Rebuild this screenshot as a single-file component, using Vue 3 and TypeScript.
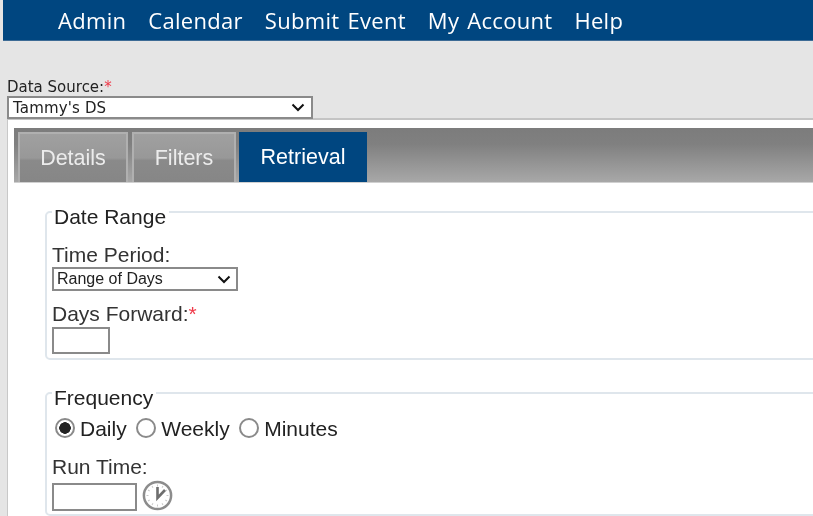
<script setup lang="ts">
import { ref } from 'vue'

const navItems = ['Admin', 'Calendar', 'Submit Event', 'My Account', 'Help']
const tabs = ['Details', 'Filters', 'Retrieval']
const activeTab = ref('Retrieval')
const frequencies = ['Daily', 'Weekly', 'Minutes']
const frequency = ref('Daily')
const ticks = Array.from({ length: 12 }, (_, i) => i * 30)
</script>

<template>
  <div class="page">
    <nav class="nav">
      <a v-for="item in navItems" :key="item" class="nav__item">{{ item }}</a>
    </nav>

    <div class="source">
      <label class="source__label">Data Source:<span class="req">*</span></label>
      <div class="select select--source">
        <span>Tammy's DS</span>
        <svg width="14" height="9" viewBox="0 0 14 9" aria-hidden="true">
          <path d="M1.5 1.5 7 7l5.5-5.5" fill="none" stroke="#111" stroke-width="2" />
        </svg>
      </div>
    </div>

    <section class="panel">
      <div class="tabs">
        <button
          v-for="tab in tabs"
          :key="tab"
          class="tab"
          :class="{ 'tab--active': tab === activeTab }"
          @click="activeTab = tab"
        >
          {{ tab }}
        </button>
      </div>

      <fieldset class="group group--date">
        <legend>Date Range</legend>
        <div class="label label--period">Time Period:</div>
        <div class="select select--period">
          <span>Range of Days</span>
          <svg width="14" height="9" viewBox="0 0 14 9" aria-hidden="true">
            <path d="M1.5 1.5 7 7l5.5-5.5" fill="none" stroke="#111" stroke-width="2" />
          </svg>
        </div>
        <div class="label label--forward">Days Forward:<span class="req">*</span></div>
        <input class="input input--days" type="text" />
      </fieldset>

      <fieldset class="group group--frequency">
        <legend>Frequency</legend>
        <div class="radios">
          <label v-for="f in frequencies" :key="f" class="radio">
            <input v-model="frequency" type="radio" name="frequency" :value="f" />
            {{ f }}
          </label>
        </div>
        <div class="label label--run">Run Time:</div>
        <div class="time">
          <input class="input input--time" type="text" />
          <svg class="clock" width="31" height="31" viewBox="0 0 31 31" aria-hidden="true">
            <circle cx="15.5" cy="15.5" r="13.6" fill="#fff" stroke="#8c8c8c" stroke-width="2.5" />
            <line
              v-for="t in ticks"
              :key="t"
              x1="15.5"
              y1="4.5"
              x2="15.5"
              y2="6.5"
              stroke="#c8c8c8"
              :transform="`rotate(${t} 15.5 15.5)`"
            />
            <path d="M15.5 7v11l7.5-8" fill="none" stroke="#6e6e6e" stroke-width="2.6" />
          </svg>
        </div>
      </fieldset>
    </section>
  </div>
</template>

<style>
body {
  background: #e5e5e5;
}
</style>

<style scoped>
.page {
  width: 813px;
  height: 516px;
  overflow: hidden;
  background: #e5e5e5;
  font-family: "Liberation Sans", Arial, sans-serif;
  color: #333;
  filter: blur(0.35px);
}

.nav {
  display: flex;
  gap: 22px;
  height: 41px;
  margin-left: 3px;
  padding-left: 55px;
  align-items: center;
  background: #004680;
  border-bottom: 1px solid #3d6b95;
  box-sizing: border-box;
  color: #fff;
  font-family: "Open Sans", sans-serif;
  font-size: 22px;
  letter-spacing: 0.3px;
  word-spacing: 2px;
}

.source {
  padding: 38px 0 0 7px;
}

.source__label {
  display: block;
  height: 17px;
  font-family: "DejaVu Sans", sans-serif;
  font-size: 15px;
  line-height: 17px;
  color: #222;
}

.req {
  color: #f03a4a;
}

.select {
  display: flex;
  align-items: center;
  justify-content: space-between;
  box-sizing: border-box;
  background: #fff;
  border: 2px solid #8a8a8a;
  color: #222;
}

.select--source {
  width: 306px;
  height: 23px;
  padding: 0 6px 0 4px;
  font-family: "DejaVu Sans", sans-serif;
  font-size: 15px;
  letter-spacing: 0.15px;
  position: relative;
  z-index: 1;
}

.select--period {
  width: 186px;
  height: 24px;
  margin-top: 1px;
  padding: 0 5px 0 3px;
  font-size: 16px;
}

.panel {
  width: 900px;
  height: 400px;
  margin-left: 7px;
  margin-top: -1px;
  padding: 8px 0 0 6px;
  background: #fff;
  border-top: 2px solid #c4c4c4;
  border-left: 1px solid #c8c8c8;
  box-sizing: border-box;
}

.tabs {
  display: flex;
  align-items: flex-end;
  gap: 4px;
  height: 55px;
  padding-left: 4px;
  background: linear-gradient(#7c7c7c 0%, #808080 30%, #a8a8a8 100%);
  border-bottom: 1px solid #d0d0d0;
  box-sizing: border-box;
}

.tab {
  height: 50px;
  width: 110px;
  padding: 0;
  border: 2px solid #b0b0b0;
  border-bottom: 0;
  background: linear-gradient(#a0a0a0 0%, #989898 50%, #8a8a8a 55%, #868686 100%);
  color: #ececec;
  font-family: "Liberation Sans", Arial, sans-serif;
  font-size: 21.5px;
}

.tab:nth-child(2) {
  width: 104px;
}

.tab--active {
  width: 128px;
  margin-left: -1px;
  border: 0;
  background: #004680;
  color: #fff;
}

.group {
  width: 860px;
  margin: 0 0 0 31px;
  padding: 0 0 0 5px;
  box-sizing: border-box;
  border: 2px solid #dfe6ec;
  border-radius: 5px;
  font-size: 21px;
}

.group legend {
  margin-left: 0;
  padding: 10px 3px 0 2px;
  line-height: 22px;
  color: #222;
}

.group--date {
  height: 164px;
  margin-top: 13px;
}

.group--frequency {
  height: 139px;
  margin-top: 17px;
}

.label {
  height: 23px;
  line-height: 23px;
  color: #333;
}

.label--period {
  margin-top: 15px;
}

.label--forward {
  margin-top: 11px;
  height: 24px;
}

.input {
  display: block;
  box-sizing: border-box;
  padding: 0;
  background: #fff;
  border: 2px solid #8a8a8a;
}

.input--days {
  width: 58px;
  height: 27px;
  margin-top: 1px;
}

.input--time {
  width: 85px;
  height: 28px;
}

.radios {
  display: flex;
  gap: 9.5px;
  height: 30px;
  margin: 5px 0 0 3px;
  align-items: center;
  color: #222;
}

.radio {
  display: flex;
  align-items: center;
  gap: 5px;
}

.radio input {
  appearance: none;
  width: 20px;
  height: 20px;
  margin: 0 0 3px;
  border: 2px solid #8a8a8a;
  border-radius: 50%;
  background: #fff;
}

.radio input:checked {
  background: radial-gradient(circle, #222 0 5.5px, #fff 6px);
}

.label--run {
  margin-top: 11px;
}

.time {
  display: flex;
  align-items: center;
  gap: 5px;
  margin-top: 2px;
}

.clock {
  margin-bottom: 2px;
}
</style>
